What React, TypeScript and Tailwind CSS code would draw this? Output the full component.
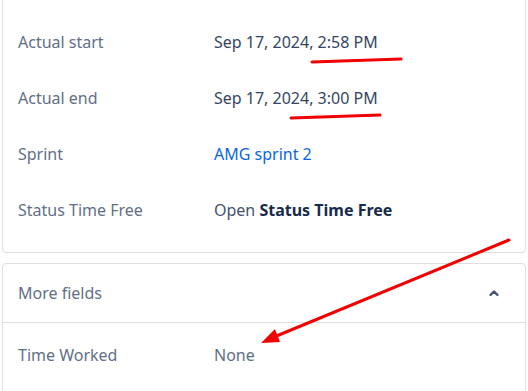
import { ReactNode } from "react";

type Field = {
  label: string;
  value: ReactNode;
};

const fields: Field[] = [
  { label: "Actual start", value: <span className="text-[#344563]">Sep 17, 2024, 2:58 PM</span> },
  { label: "Actual end", value: <span className="text-[#344563]">Sep 17, 2024, 3:00 PM</span> },
  { label: "Sprint", value: <span className="text-[#0c66e4]">AMG sprint 2</span> },
  {
    label: "Status Time Free",
    value: (
      <span className="text-[#44546f]">
        Open <b className="font-bold text-[#172b4d]">Status Time Free</b>
      </span>
    ),
  },
];

function Row({ label, value }: Field) {
  return (
    <div className="flex h-14 items-center">
      <div className="w-[196px] shrink-0 text-[#626f86]">{label}</div>
      <div>{value}</div>
    </div>
  );
}

export default function App() {
  return (
    <div className="relative h-[391px] w-[528px] overflow-hidden bg-white font-['Noto_Sans',sans-serif] text-[16px]">
      <div className="mx-[2px] -mt-4 rounded-[4px] border border-[#dcdfe4] px-[15px] pt-[29px] pb-[14px]">
        {fields.map((f) => (
          <Row key={f.label} {...f} />
        ))}
      </div>

      <div className="mx-[2px] mt-[10px] rounded-[4px] border border-[#dcdfe4]">
        <div className="flex h-[59px] items-center justify-between border-b border-[#dcdfe4] pl-[15px] pr-[25px]">
          <span className="text-[#626f86]">More fields</span>
          <svg width="12" height="8" viewBox="0 0 12 8" className="text-[#44546f]">
            <path d="M2.5 6 L6 2.5 L9.5 6" fill="none" stroke="currentColor" strokeWidth="2.4" strokeLinecap="round" strokeLinejoin="round" />
          </svg>
        </div>
        <div className="px-[15px] pt-1 pb-8">
          <Row label="Time Worked" value={<span className="text-[#626f86]">None</span>} />
        </div>
      </div>

      {/* red annotations drawn over the screenshot */}
      <svg className="pointer-events-none absolute inset-0" width="528" height="391" viewBox="0 0 528 391">
        <path d="M312 62 L401 59" stroke="#f20000" strokeWidth="3" strokeLinecap="round" fill="none" />
        <path d="M291 118 L380 115" stroke="#f20000" strokeWidth="3" strokeLinecap="round" fill="none" />
        <path d="M509 240 L274 337" stroke="#f20000" strokeWidth="3" strokeLinecap="round" fill="none" />
        <path d="M261 343 L275 329 L280 342 Z" fill="#f20000" />
      </svg>
    </div>
  );
}
